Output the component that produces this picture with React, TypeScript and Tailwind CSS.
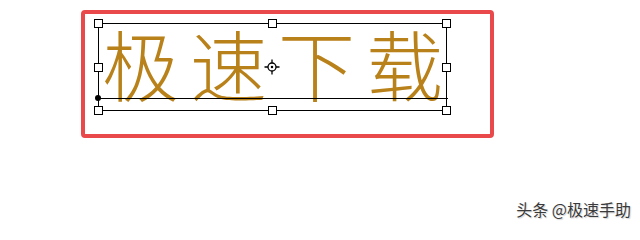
import React from "react";

/** Small white square handle of the transform box */
function Handle({ className }: { className: string }) {
    return <div className={`absolute h-[9px] w-[9px] border border-black bg-white ${className}`} />;
}

export default function App() {
    return (
        <div
            className="relative h-[240px] w-[640px] overflow-hidden bg-white"
            style={{ fontFamily: '"Noto Sans CJK SC", "Noto Sans", sans-serif' }}
        >
            {/* Red highlight frame */}
            <div className="ml-[81px] mt-[10px] h-[128px] w-[413px] rounded-[4px] border-4 border-[#e9494b] pl-[13px] pt-[9px]">
                {/* Transform / selection box */}
                <div className="relative h-[88px] w-[349px] border border-black">
                    <div className="flex gap-[11px] whitespace-nowrap pl-[3px] text-[77px] font-light leading-none text-[#b98119]">
                        <span>极</span>
                        <span>速</span>
                        <span>下</span>
                        <span>载</span>
                    </div>

                    {/* baseline */}
                    <div className="absolute left-0 right-[-2px] top-[74px] h-px bg-black" />
                    <div className="absolute left-[-4px] top-[71px] h-[6px] w-[6px] rounded-full bg-black" />

                    {/* handles */}
                    <Handle className="left-[-5px] top-[-5px]" />
                    <Handle className="left-[169px] top-[-5px]" />
                    <Handle className="right-[-5px] top-[-5px]" />
                    <Handle className="left-[-5px] top-[39px]" />
                    <Handle className="right-[-5px] top-[39px]" />
                    <Handle className="left-[-5px] bottom-[-5px]" />
                    <Handle className="left-[169px] bottom-[-5px]" />
                    <Handle className="right-[-5px] bottom-[-5px]" />

                    {/* centre point */}
                    <svg
                        className="absolute left-[165px] top-[35px]"
                        width="16"
                        height="16"
                        viewBox="0 0 16 16"
                        fill="none"
                        stroke="black"
                        strokeWidth="1.3"
                    >
                        <circle cx="8" cy="8" r="4" />
                        <path d="M8 0.5v3.5M8 12v3.5M0.5 8h3.5M12 8h3.5" />
                        <circle cx="8" cy="8" r="0.6" fill="black" />
                    </svg>
                </div>
            </div>

            {/* watermark */}
            <div className="absolute right-[9px] top-[198px] text-[16px] leading-[22px] text-[#3a3a3a] [text-shadow:0_0_2px_#fff,1px_1px_1px_#ccc]">
                头条 @极速手助
            </div>
        </div>
    );
}
